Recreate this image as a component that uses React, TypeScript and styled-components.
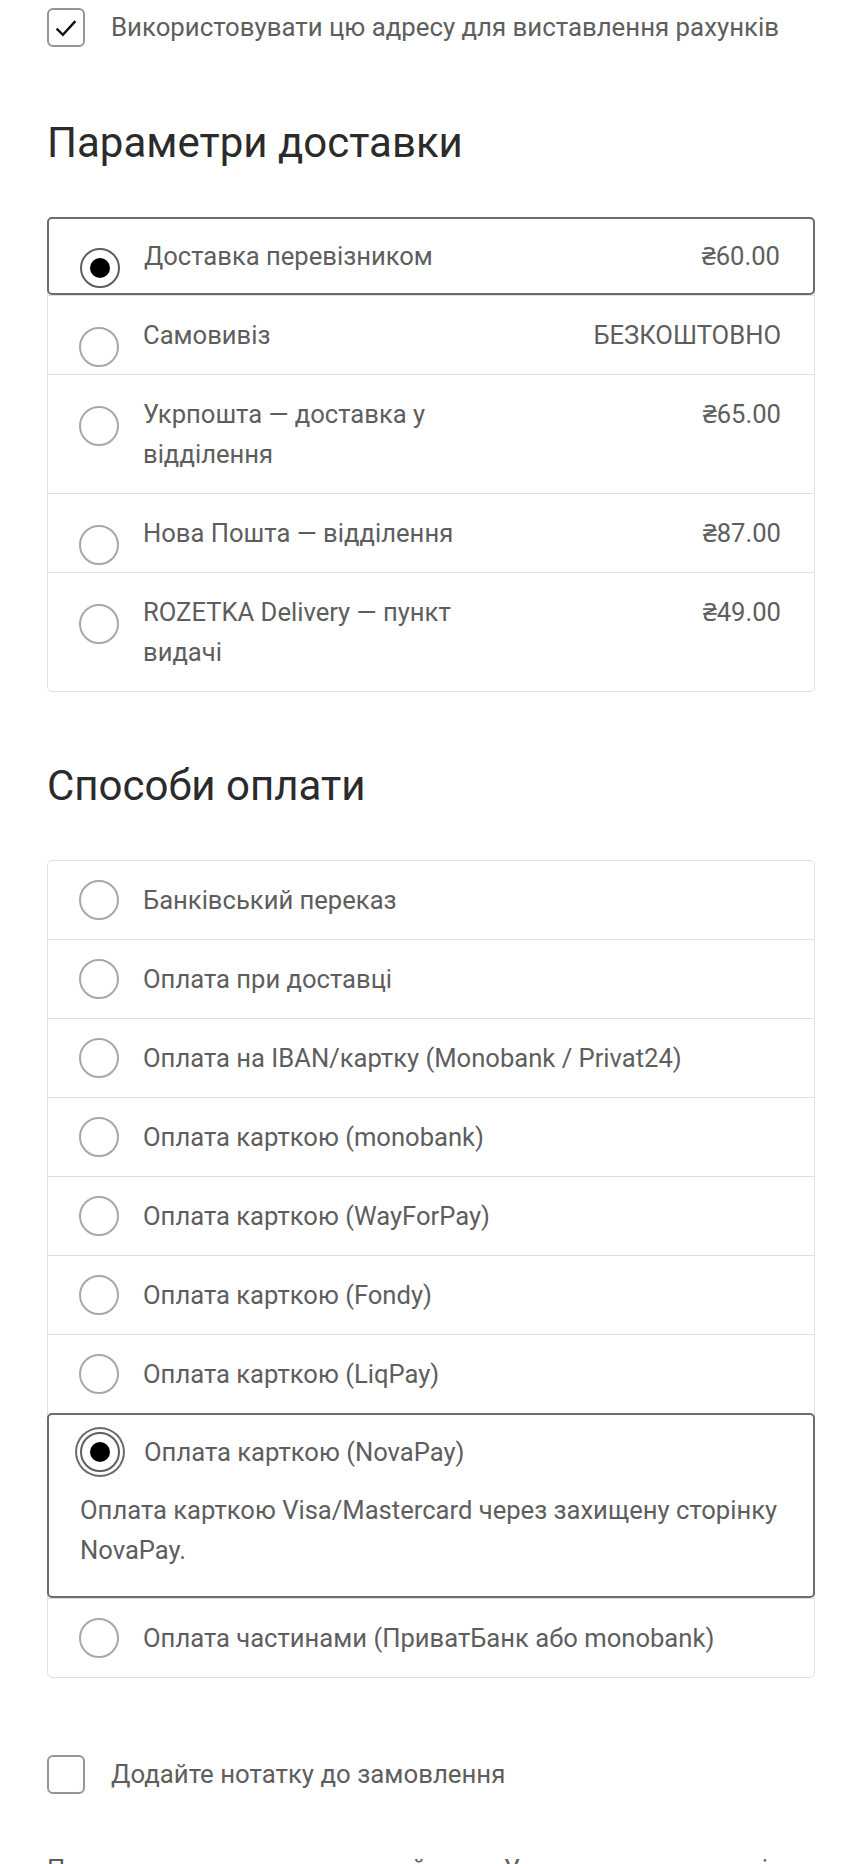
import React from "react";
import styled, { createGlobalStyle, css } from "styled-components";

const GlobalStyle = createGlobalStyle`
  * {
    box-sizing: border-box;
  }
  body {
    margin: 0;
    background: #fff;
    font-family: Roboto, "Noto Sans", sans-serif;
    color: #5e5e5e;
  }
`;

const Page = styled.main`
  padding: 8px 45px 0 47px;
`;

const CheckboxRow = styled.label<{ $top?: number }>`
  display: flex;
  align-items: center;
  gap: 26px;
  margin-top: ${(p) => p.$top ?? 0}px;
  font-size: 25.8px;
  line-height: 39px;
`;

const Box = styled.span`
  flex: 0 0 auto;
  width: 38px;
  height: 39px;
  border: 2px solid #969696;
  border-radius: 6px;
  display: flex;
  align-items: center;
  justify-content: center;
`;

const Section = styled.section<{ $top: number }>`
  margin-top: ${(p) => p.$top}px;
`;

const Title = styled.h2`
  margin: 0 0 48px;
  font-size: 42px;
  line-height: 52px;
  font-weight: 400;
  color: #2b2b2b;
`;

const Card = styled.div`
  border: 1px solid #e0e0e0;
  border-radius: 5px;
`;

const Option = styled.div<{ $checked?: boolean }>`
  border-top: 1px solid #e0e0e0;
  padding: 19px 33px 19px 31px;
  font-size: 25.6px;
  line-height: 40px;

  &:first-child {
    border-top: none;
  }

  ${(p) =>
    p.$checked &&
    css`
      position: relative;
      margin: 0 -1px;
      border: 2px solid #6c6c6c;
      border-radius: 5px;
      padding-top: 17px;
      padding-bottom: 17px;

      &:first-child {
        margin-top: -1px;
        border-top: 2px solid #6c6c6c;
      }
      &:last-child {
        margin-bottom: -1px;
      }
    `}
`;

const ShipLine = styled.div`
  display: flex;
  align-items: flex-start;
  gap: 24px;
`;

const PayLine = styled.div`
  display: flex;
  align-items: center;
  gap: 24px;
`;

const Radio = styled.span<{ $checked?: boolean; $focus?: boolean; $drop?: boolean }>`
  flex: 0 0 auto;
  width: 40px;
  height: 40px;
  border-radius: 50%;
  border: 2px solid ${(p) => (p.$checked ? "#5f5f5f" : "#a8a8a8")};
  background: #fff;
  display: flex;
  align-items: center;
  justify-content: center;
  margin: ${(p) => (p.$drop ? "12px 0 -12px" : "0")};
  box-shadow: ${(p) => (p.$focus ? "0 0 0 3px #fff, 0 0 0 5px #6c6c6c" : "none")};

  &::after {
    content: "";
    width: 20px;
    height: 20px;
    border-radius: 50%;
    background: #000;
    display: ${(p) => (p.$checked ? "block" : "none")};
  }
`;

const LabelGroup = styled.div`
  flex: 1;
  display: flex;
  justify-content: space-between;
`;

const Label = styled.span`
  flex: 1 1 0;
`;

const Price = styled.span`
  flex: 1 1 0;
  text-align: right;
`;

const Description = styled.p`
  margin: 18px 0 9px;
`;

const Terms = styled.p`
  margin: 57px 0 0;
  font-size: 25.6px;
  line-height: 36px;
`;

const shipping = [
  { name: "Доставка перевізником", price: "₴60.00", checked: true },
  { name: "Самовивіз", price: "БЕЗКОШТОВНО" },
  { name: "Укрпошта — доставка у відділення", price: "₴65.00" },
  { name: "Нова Пошта — відділення", price: "₴87.00" },
  { name: "ROZETKA Delivery — пункт видачі", price: "₴49.00" },
];

const payments = [
  { name: "Банківський переказ" },
  { name: "Оплата при доставці" },
  { name: "Оплата на IBAN/картку (Monobank / Privat24)" },
  { name: "Оплата карткою (monobank)" },
  { name: "Оплата карткою (WayForPay)" },
  { name: "Оплата карткою (Fondy)" },
  { name: "Оплата карткою (LiqPay)" },
  {
    name: "Оплата карткою (NovaPay)",
    checked: true,
    description: "Оплата карткою Visa/Mastercard через захищену сторінку NovaPay.",
  },
  { name: "Оплата частинами (ПриватБанк або monobank)" },
];

const CheckIcon = () => (
  <svg width="30" height="30" viewBox="0 0 24 24" fill="none">
    <path d="M4.5 12.5l5 5L19.5 6.5" stroke="#111" strokeWidth="1.9" />
  </svg>
);

export default function App() {
  return (
    <>
      <GlobalStyle />
      <Page>
        <CheckboxRow>
          <Box>
            <CheckIcon />
          </Box>
          Використовувати цю адресу для виставлення рахунків
        </CheckboxRow>

        <Section $top={70}>
          <Title>Параметри доставки</Title>
          <Card>
            {shipping.map((s) => (
              <Option key={s.name} $checked={s.checked}>
                <ShipLine>
                  <Radio $checked={s.checked} $drop />
                  <LabelGroup>
                    <Label>{s.name}</Label>
                    <Price>{s.price}</Price>
                  </LabelGroup>
                </ShipLine>
              </Option>
            ))}
          </Card>
        </Section>

        <Section $top={68}>
          <Title>Способи оплати</Title>
          <Card>
            {payments.map((p) => (
              <Option key={p.name} $checked={p.checked}>
                <PayLine>
                  <Radio $checked={p.checked} $focus={p.checked} />
                  <span>{p.name}</span>
                </PayLine>
                {p.description && <Description>{p.description}</Description>}
              </Option>
            ))}
          </Card>
        </Section>

        <CheckboxRow $top={77}>
          <Box />
          Додайте нотатку до замовлення
        </CheckboxRow>

        <Terms>
          Продовжуючи покупку, ви приймаєте Умови та положення і Політику конфіденційності
        </Terms>
      </Page>
    </>
  );
}
